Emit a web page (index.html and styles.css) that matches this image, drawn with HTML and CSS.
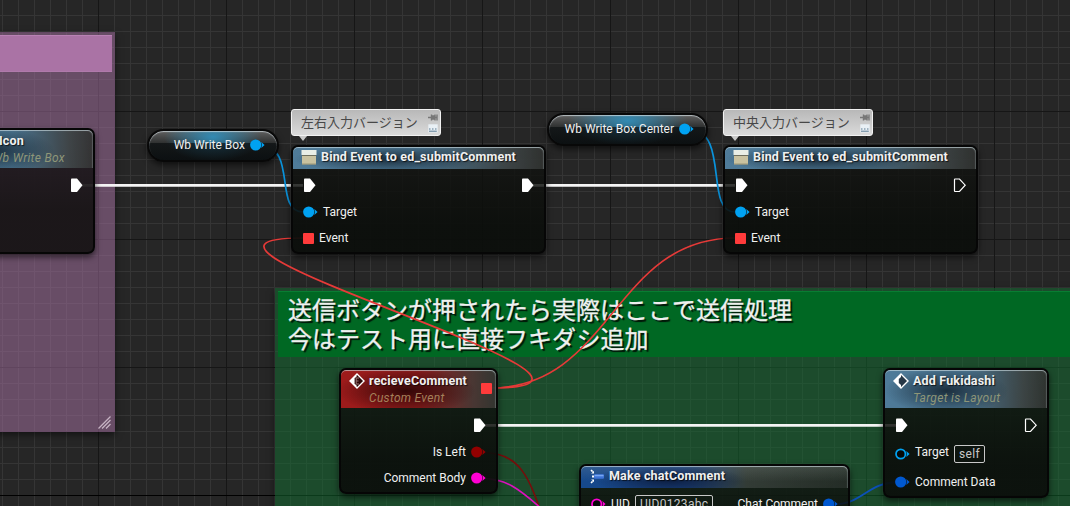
FILE: index.html
```html
<!DOCTYPE html>
<html lang="ja">
<head>
  <meta charset="UTF-8" />
  <meta name="viewport" content="width=device-width, initial-scale=1.0"/>
  <title>Event Graph</title>
  <link rel="stylesheet" href="styles.css">
</head>
<body>
  <!-- Shared icons -->
  <svg class="defs" width="0" height="0">
    <symbol id="exec-on" viewBox="0 0 13 15"><path d="M1 1.3Q1 0.5 1.8 0.5H7L12.5 7.2L7 14H1.8Q1 14 1 13.2Z" fill="#fff"/></symbol>
    <symbol id="exec-off" viewBox="0 0 13 15"><path d="M1.5 1.5Q1.5 1 2 1H6.5L12.2 7.2L6.5 13.5H2Q1.5 13.5 1.5 13Z" fill="none" stroke="#fff" stroke-width="1.2"/></symbol>
    <symbol id="pin" viewBox="0 0 15 12"><circle cx="5.7" cy="6" r="5.6" fill="currentColor"/><path d="M11.3 3L14.6 6L11.3 9Q12.4 6 11.3 3Z" fill="currentColor"/></symbol>
    <symbol id="pin-open" viewBox="0 0 15 12"><circle cx="5.7" cy="6" r="4.7" fill="#060a08" stroke="currentColor" stroke-width="1.7"/><path d="M11.3 3L14.6 6L11.3 9Q12.4 6 11.3 3Z" fill="currentColor"/></symbol>
    <symbol id="bind" viewBox="0 0 16 16">
      <rect x="0.5" y="0" width="15" height="5" fill="#e9eee6"/>
      <rect x="1" y="5" width="14" height="1" fill="#6f6f5e"/>
      <rect x="1" y="6" width="14" height="8" fill="#c9c2a0"/>
      <rect x="1" y="13.4" width="14" height="1.3" fill="#a39d7e"/>
    </symbol>
    <symbol id="event" viewBox="0 0 16 16">
      <path d="M8 1L15 8L8 15L1 8Z" fill="#2c0808" stroke="#fff" stroke-width="1.4"/>
      <path d="M7.5 1.5V4L5.6 5V11L7.5 12V14.5L1 8Z" fill="#fff"/>
      <path d="M10 5H7.2V11H10M7.2 8H9.5" stroke="#9a7474" stroke-width="1" fill="none"/>
    </symbol>
    <symbol id="message" viewBox="0 0 16 16">
      <path d="M8 1L15 8L8 15L1 8Z" fill="#263746" stroke="#fff" stroke-width="1.4"/>
      <path d="M8 1V4L5.8 6V10L8 12V15L1 8Z" fill="#fff"/>
    </symbol>
    <symbol id="make" viewBox="0 0 16 16">
      <rect x="5" y="5.3" width="10" height="4.4" rx="1" fill="#3d73d6"/>
      <rect x="5.5" y="5.8" width="9" height="1.5" fill="#79a7f2"/>
      <path d="M2 1L3.6 2.6M2 14L3.6 12.4" stroke="#fff" stroke-width="1.5"/>
      <path d="M5 1.8V4.6H2.2ZM5 13.2V10.4H2.2ZM3 6.5H5V8.5H3Z" fill="#fff"/>
    </symbol>
    <symbol id="pushpin" viewBox="0 0 10 8"><path d="M0 4H3M3.5 1V7M3.5 2.5H7V5.5H3.5M7 1V7M9 1V7M7 4H9" stroke="#777" stroke-width="1.4" fill="#777"/></symbol>
    <symbol id="keyboard" viewBox="0 0 10 9"><rect x="0.3" y="0.3" width="9.4" height="8.2" fill="#e9f0f5"/><path d="M1 5H2.5M4 5H5.5M7 5H8.5M1 7.2H8.8" stroke="#587890" stroke-width="1"/></symbol>
  </svg>

  <main class="graph">
    <section class="comment comment-purple">
      <div class="comment-title"></div>
      <svg class="grip" width="14" height="13" viewBox="0 0 14 13"><path d="M0.5 12.5L12.5 0.5M4 12.5L12.5 4M8 12.5L12.5 8" stroke="#c6b3c4" stroke-width="1.3"/></svg>
    </section>
    <section class="comment comment-green">
      <h2 class="comment-title">送信ボタンが押されたら実際はここで送信処理<br>今はテスト用に直接フキダシ追加</h2>
    </section>

    <svg class="wires" width="1070" height="506" fill="none">
      <g class="exec-wires">
        <path d="M80 185.3H303"/>
        <path d="M532 185.3H735"/>
        <path d="M484 425.3H896"/>
      </g>
      <g stroke="#e63a38" stroke-width="1.7">
        <path d="M490 388C688 388 113 238 303 238"/>
        <path d="M490 388C612 388 613 238 735 238"/>
      </g>
      <g stroke="#0a93dc" stroke-width="1.7">
        <path d="M260 145.5C298 145.5 273 212 303 212"/>
        <path d="M689 129.5C730 129.5 704 212 735 212"/>
      </g>
      <path d="M483 452.5C520 452.5 529 478 542 515" stroke="#760d0b" stroke-width="1.6"/>
      <path d="M483 478.5C505 478.5 519 488 545 512" stroke="#e010c0" stroke-width="1.6"/>
      <path d="M832 504.5C864 504.5 866 482 900 482" stroke="#0c50b8" stroke-width="1.8"/>
    </svg>

    <article class="node node-icon func">
      <header class="node-head tall">
        <div><h3>Icon</h3><p>Wb Write Box</p></div>
      </header>
      <div class="pins">
        <div class="col"></div>
        <div class="col out"><div class="row"><svg class="exec"><use href="#exec-on"/></svg></div></div>
      </div>
    </article>

    <div class="getter getter-box"><span>Wb Write Box</span><svg class="dot object"><use href="#pin"/></svg></div>
    <div class="getter getter-center"><span>Wb Write Box Center</span><svg class="dot object"><use href="#pin"/></svg></div>

    <div class="bubble bubble-sides">
      <span>左右入力バージョン</span>
      <div class="bubble-tools"><svg><use href="#pushpin"/></svg><svg><use href="#keyboard"/></svg></div>
    </div>
    <div class="bubble bubble-center">
      <span>中央入力バージョン</span>
      <div class="bubble-tools"><svg><use href="#pushpin"/></svg><svg><use href="#keyboard"/></svg></div>
    </div>

    <article class="node node-bind-sides func">
      <header class="node-head"><svg class="icon"><use href="#bind"/></svg><h3>Bind Event to ed_submitComment</h3></header>
      <div class="pins">
        <div class="col">
          <div class="row"><svg class="exec"><use href="#exec-on"/></svg></div>
          <div class="row"><svg class="dot object"><use href="#pin"/></svg><span>Target</span></div>
          <div class="row"><i class="delegate"></i><span>Event</span></div>
        </div>
        <div class="col out"><div class="row"><svg class="exec"><use href="#exec-on"/></svg></div></div>
      </div>
    </article>

    <article class="node node-bind-center func">
      <header class="node-head"><svg class="icon"><use href="#bind"/></svg><h3>Bind Event to ed_submitComment</h3></header>
      <div class="pins">
        <div class="col">
          <div class="row"><svg class="exec"><use href="#exec-on"/></svg></div>
          <div class="row"><svg class="dot object"><use href="#pin"/></svg><span>Target</span></div>
          <div class="row"><i class="delegate"></i><span>Event</span></div>
        </div>
        <div class="col out"><div class="row"><svg class="exec"><use href="#exec-off"/></svg></div></div>
      </div>
    </article>

    <article class="node node-recieve custom">
      <header class="node-head tall">
        <svg class="icon"><use href="#event"/></svg>
        <div><h3>recieveComment</h3><p>Custom Event</p></div>
        <i class="delegate"></i>
      </header>
      <div class="pins">
        <div class="col"></div>
        <div class="col out">
          <div class="row"><svg class="exec"><use href="#exec-on"/></svg></div>
          <div class="row"><span>Is Left</span><svg class="dot bool"><use href="#pin"/></svg></div>
          <div class="row"><span>Comment Body</span><svg class="dot string"><use href="#pin"/></svg></div>
        </div>
      </div>
    </article>

    <article class="node node-make struct">
      <header class="node-head"><svg class="icon"><use href="#make"/></svg><h3>Make chatComment</h3></header>
      <div class="pins">
        <div class="col"><div class="row"><svg class="dot string"><use href="#pin-open"/></svg><span>UID</span><b class="value">UID0123abc</b></div></div>
        <div class="col out"><div class="row"><span>Chat Comment</span><svg class="dot data"><use href="#pin"/></svg></div></div>
      </div>
    </article>

    <article class="node node-add func">
      <header class="node-head tall">
        <svg class="icon"><use href="#message"/></svg>
        <div><h3>Add Fukidashi</h3><p>Target is Layout</p></div>
      </header>
      <div class="pins">
        <div class="col">
          <div class="row"><svg class="exec"><use href="#exec-on"/></svg></div>
          <div class="row self-row"><svg class="dot object"><use href="#pin-open"/></svg><span>Target</span><b class="value">self</b></div>
          <div class="row"><svg class="dot data"><use href="#pin"/></svg><span>Comment Data</span></div>
        </div>
        <div class="col out"><div class="row"><svg class="exec"><use href="#exec-off"/></svg></div></div>
      </div>
    </article>
  </main>
</body>
</html>
```

FILE: styles.css
```css
* {
  margin: 0;
  padding: 0;
  box-sizing: border-box;
}

body {
  font-family: Roboto, "Noto Sans CJK JP", sans-serif;
  font-size: 12px;
  color: #f0f0f0;
  overflow: hidden;
}

.defs {
  position: absolute;
}

/* Grid: 16px squares, a dark line every 8 */
.graph {
  position: relative;
  width: 1070px;
  height: 506px;
  overflow: hidden;
  background-color: #262626;
  background-image:
    linear-gradient(#000, #000),
    linear-gradient(90deg, #161616 1px, transparent 1px),
    linear-gradient(#161616 1px, transparent 1px),
    linear-gradient(90deg, #353535 1px, transparent 1px),
    linear-gradient(#353535 1px, transparent 1px);
  background-size: 100% 1px, 128px 128px, 128px 128px, 16px 16px, 16px 16px;
  background-position: 0 495px, 98px 0, 0 111px, 2px 0, 0 15px;
  background-repeat: no-repeat, repeat, repeat, repeat, repeat;
}

/* Comment boxes */
.comment {
  position: absolute;
  padding: 3px;
  box-shadow: 0 3px 7px rgba(0, 0, 0, 0.5);
}

.comment-purple {
  left: -20px;
  top: 32px;
  width: 135px;
  height: 400px;
  background: rgba(170, 115, 165, 0.5);
  border: 1px solid rgba(90, 60, 90, 0.35);
  padding: 2px;
}

.comment-purple .comment-title {
  height: 37px;
  background: #aa73a5;
  border-top: 1px solid #b982b4;
  border-bottom: 1px solid #b07aab;
}

.comment-green {
  left: 275px;
  top: 288px;
  width: 820px;
  height: 240px;
  background: rgba(20, 105, 50, 0.55);
}

.comment-green .comment-title {
  height: 66px;
  padding: 5px 10px;
  background: #006823;
  border-top: 1px solid #087d32;
  font-size: 24px;
  font-weight: 400;
  line-height: 29px;
  white-space: nowrap;
  color: #f0f0f0;
  text-shadow: 2px 2px 1px rgba(0, 0, 0, 0.8);
  -webkit-text-stroke: 0.3px #f0f0f0;
}

.grip {
  position: absolute;
  right: 2px;
  bottom: 2px;
}

.wires {
  position: absolute;
  left: 0;
  top: 0;
}

.exec-wires {
  stroke: #f4f4f4;
  stroke-width: 2.8;
}

/* Nodes */
.node {
  position: absolute;
  border: 2px solid #060606;
  border-radius: 7px;
  background: linear-gradient(rgba(18, 20, 18, 0.76), rgba(13, 15, 12, 0.85) 45%, rgba(11, 14, 11, 0.93) 75%);
  box-shadow: 0 3px 6px rgba(0, 0, 0, 0.6);
}

.node-icon { left: -70px; top: 128px; width: 165px; height: 126px; background: linear-gradient(rgba(24, 20, 24, 0.8), rgba(26, 22, 24, 0.98) 65%); }
.node-bind-sides { left: 291px; top: 145px; width: 255px; height: 109px; }
.node-bind-center { left: 723px; top: 145px; width: 255px; height: 109px; }
.node-recieve { left: 339px; top: 368px; width: 159px; height: 126px; }
.node-make { left: 579px; top: 464px; width: 271px; height: 109px; }
.node-add { left: 883px; top: 368px; width: 166px; height: 130px; }

.node-head {
  display: flex;
  align-items: flex-start;
  gap: 4px;
  height: 22px;
  padding: 1px 8px 0 8px;
  border-radius: 5px 5px 0 0;
  box-shadow: inset 0 1px 0 rgba(210, 225, 230, 0.5), inset -1px 1px 1px rgba(210, 225, 230, 0.25);
}

.node-head.tall {
  height: 38px;
  padding-top: 2px;
}

.func .node-head {
  background:
    radial-gradient(ellipse 38% 60% at 38% 55%, rgba(20, 35, 48, 0.85), transparent),
    linear-gradient(90deg, #4f7b99, #49728d 50%, rgba(68, 76, 78, 0.85) 85%, rgba(58, 60, 58, 0.7));
}

.custom .node-head {
  background:
    radial-gradient(ellipse 45% 60% at 42% 55%, rgba(40, 5, 5, 0.9), transparent),
    linear-gradient(90deg, #9e1b1b, #8d1c1c 50%, rgba(80, 58, 55, 0.9) 85%, rgba(62, 62, 58, 0.75));
}

.struct .node-head {
  background:
    radial-gradient(ellipse 28% 70% at 33% 65%, rgba(10, 22, 50, 0.8), transparent),
    linear-gradient(rgba(160, 170, 165, 0.2), transparent 70%),
    linear-gradient(90deg, #16498c, #1a4382 38%, rgba(62, 70, 65, 0.75) 62%, rgba(48, 55, 50, 0.6));
}

.icon {
  width: 16px;
  height: 16px;
  flex: none;
  margin-top: 2px;
}

.tall .icon {
  margin-top: 1px;
}

h3 {
  font-size: 12.5px;
  line-height: 18px;
  font-weight: 700;
  letter-spacing: 0.17px;
  white-space: nowrap;
  text-shadow: 1px 1px 1px rgba(0, 0, 0, 0.7);
}

.node-head p {
  font-size: 12px;
  line-height: 17px;
  font-style: italic;
  letter-spacing: 0.3px;
  white-space: nowrap;
  color: #8e9678;
}

.custom .node-head p {
  color: #a5805a;
}

.node-icon .node-head {
  padding-left: 60px;
}

.node-icon h3 {
  margin-left: 7px;
}

.node-head .delegate {
  margin: 11px -4px 0 auto;
}

.pins {
  display: flex;
  justify-content: space-between;
  padding: 3px 10px 0 10px;
}

.tall + .pins {
  padding-top: 4px;
}

.row {
  display: flex;
  align-items: center;
  gap: 5px;
  height: 26px;
  white-space: nowrap;
}

.row:first-child {
  height: 27px;
}

.out .row {
  justify-content: flex-end;
}

.exec {
  width: 13px;
  height: 15px;
}

.dot {
  width: 15px;
  height: 12px;
  flex: none;
}

.delegate {
  width: 11px;
  height: 11px;
  flex: none;
  border-radius: 1px;
  background: #ff3b3b;
}

.object { color: #00a2f2; }
.bool { color: #920000; }
.string { color: #ff00d4; }
.data { color: #0058d0; }

.value {
  padding: 0 4px;
  border: 1px solid #c8c8c8;
  border-radius: 2px;
  font-size: 12px;
  font-weight: 400;
  line-height: 16px;
  letter-spacing: 0.3px;
  color: #c8c8c8;
}

.node-add .self-row {
  height: 30px;
}

.self-row span {
  margin-bottom: 4px;
}

.node-make .pins {
  padding-top: 2px;
}

/* Variable getters */
.getter {
  position: absolute;
  display: flex;
  align-items: center;
  justify-content: flex-end;
  gap: 5px;
  height: 33px;
  padding: 0 12px 1px 0;
  border: 2px solid #080808;
  border-radius: 17px;
  background:
    linear-gradient(transparent 40%, rgba(8, 12, 14, 0.65) 42%),
    radial-gradient(ellipse 38% 85% at 50% 20%, rgba(48, 145, 190, 0.9), transparent),
    linear-gradient(#606060, #2a2c2c 45%, #141818);
  box-shadow: inset 0 1px 1px rgba(220, 230, 235, 0.7), 0 3px 6px rgba(0, 0, 0, 0.6);
  white-space: nowrap;
}

.getter-box { left: 147px; top: 129px; width: 132px; }
.getter-center { left: 547px; top: 113px; width: 161px; }

/* Comment bubbles */
.bubble {
  position: absolute;
  top: 109px;
  display: flex;
  align-items: center;
  justify-content: space-between;
  width: 150px;
  height: 27px;
  padding: 0 2px 2px 9px;
  border: 1px solid #f2f2f2;
  border-radius: 3px;
  background: linear-gradient(#b8b8b8, #dadada);
  font-size: 13px;
  color: #484848;
}

.bubble-sides { left: 291px; }
.bubble-center { left: 723px; }

.bubble::after {
  content: "";
  position: absolute;
  left: 7px;
  top: 26px;
  border: 4px solid transparent;
  border-top: 5px solid #c9c9c9;
  border-bottom: 0;
}

.bubble-tools {
  display: flex;
  flex-direction: column;
  gap: 2px;
  padding-top: 2px;
}

.bubble-tools svg {
  width: 10px;
  height: 9px;
}
```
